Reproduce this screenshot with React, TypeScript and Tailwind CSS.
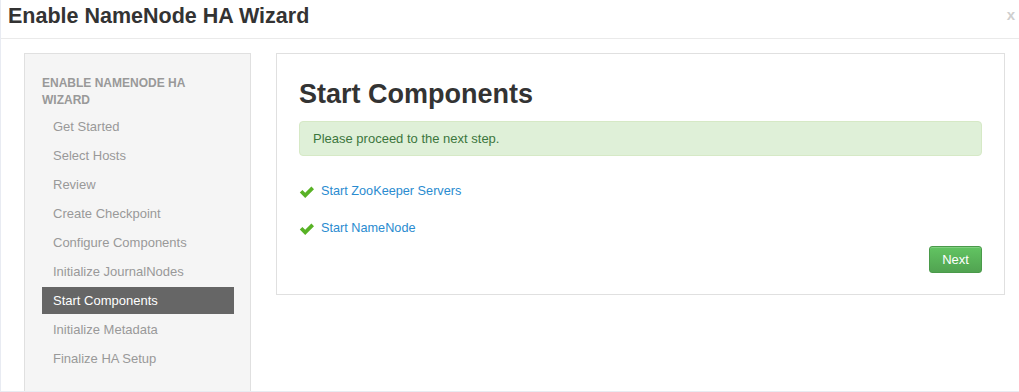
const steps = [
  "Get Started",
  "Select Hosts",
  "Review",
  "Create Checkpoint",
  "Configure Components",
  "Initialize JournalNodes",
  "Start Components",
  "Initialize Metadata",
  "Finalize HA Setup",
];

const tasks = ["Start ZooKeeper Servers", "Start NameNode"];

function CheckIcon() {
  return (
    <svg width="16" height="14" viewBox="0 0 16 14" className="shrink-0">
      <path
        d="M0.8 7.6 L3.4 5 L6.2 7.8 L12.4 1.6 L15 4.2 L6.2 13 Z"
        fill="#58b225"
      />
    </svg>
  );
}

export default function App() {
  const active = "Start Components";

  return (
    <div
      className="w-[1019px] h-[392px] overflow-hidden bg-white border-l border-b border-[#e8ebf2] text-[#333]"
      style={{ fontFamily: '"Liberation Sans", Arial, sans-serif' }}
    >
      {/* header */}
      <div className="flex items-center justify-between h-[39px] pl-[7px] pr-[4px] border-b border-[#eaeaea]">
        <h3 className="text-[21.5px] font-bold leading-none text-[#333] -mt-[4px]">
          Enable NameNode HA Wizard
        </h3>
        <span className="text-[15px] font-bold text-[#cfcfcf] -mt-[8px]">x</span>
      </div>

      {/* body */}
      <div className="flex pt-[14px] pl-[23px] pr-[14px] gap-[25px]">
        <div className="w-[227px] h-[360px] shrink-0 bg-[#f5f5f5] border border-[#e0e0e0] pt-[21px] pl-[17px] pr-[16px]">
          <div className="text-[12px] font-bold leading-[17px] uppercase text-[#999]">
            Enable NameNode HA Wizard
          </div>
          <ul className="mt-[4px] flex flex-col gap-[2px]">
            {steps.map((s) => (
              <li
                key={s}
                className={
                  s === active
                    ? "h-[27px] flex items-center pl-[11px] text-[13px] bg-[#666] text-white"
                    : "h-[27px] flex items-center pl-[11px] text-[13px] text-[#999]"
                }
              >
                {s}
              </li>
            ))}
          </ul>
        </div>

        <div className="flex-1 self-start border border-[#e0e0e0] pt-[25px] px-[22px] pb-[21px]">
          <h2 className="text-[27px] font-bold leading-[31px] text-[#333]">
            Start Components
          </h2>
          <div className="mt-[11px] h-[35px] flex items-center px-[13px] rounded-[4px] bg-[#dff0d8] border border-[#d6e9c6] text-[13px] text-[#3c763d]">
            Please proceed to the next step.
          </div>
          <div className="mt-[26px] flex flex-col gap-[17px]">
            {tasks.map((t) => (
              <div key={t} className="h-[20px] flex items-center gap-[6px]">
                <CheckIcon />
                <a className="text-[12.7px] text-[#2a8bd0]">{t}</a>
              </div>
            ))}
          </div>
          <div className="mt-[7px] flex justify-end">
            <button className="w-[53px] h-[27px] rounded-[3px] text-[13px] text-white bg-gradient-to-b from-[#62c462] to-[#51a351] border border-[#4a9a4a] shadow-[inset_0_1px_0_rgba(255,255,255,0.2)]">
              Next
            </button>
          </div>
        </div>
      </div>
    </div>
  );
}
